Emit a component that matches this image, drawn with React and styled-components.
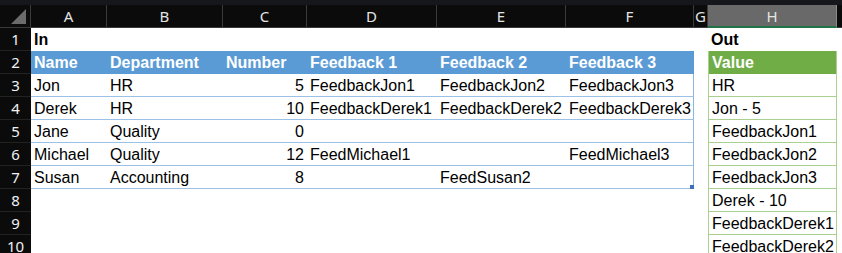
import React from 'react';
import styled, {createGlobalStyle} from 'styled-components';

const GlobalStyle = createGlobalStyle`
  html, body {
    margin: 0;
    padding: 0;
    background: #fff;
    overflow: hidden;
  }
`;

const COLS = [
  {key: 'A', w: 76},
  {key: 'B', w: 116},
  {key: 'C', w: 84},
  {key: 'D', w: 130},
  {key: 'E', w: 129},
  {key: 'F', w: 128},
  {key: 'G', w: 14},
  {key: 'H', w: 129},
];

const Sheet = styled.div`
  display: grid;
  grid-template-columns: 31px ${COLS.map(c => c.w + 'px').join(' ')} 1fr;
  grid-template-rows: 5px 23px;
  grid-auto-rows: 23px;
  width: 842px;
  height: 253px;
  overflow: hidden;
  font-family: "Liberation Sans", Arial, sans-serif;
  font-size: 16px;
  color: #000;
`;

const TopStrip = styled.div`
  grid-column: 1 / -1;
  background: #15171c;
`;

const Corner = styled.div`
  background: #0b0b0b;
  border-right: 1px solid #3a3a3a;
  border-bottom: 1px solid #3a3a3a;
  box-sizing: border-box;
  display: flex;
  align-items: flex-end;
  justify-content: flex-end;
  padding: 0 4px 3px 0;
`;

const ColHead = styled.div`
  box-sizing: border-box;
  background: ${p => (p.$active ? '#696969' : '#0b0b0b')};
  color: #e4e4e4;
  border-right: 1px solid ${p => (p.$active ? '#8a8a8a' : '#3a3a3a')};
  border-bottom: ${p => (p.$active ? '2px solid #217346' : '1px solid #3a3a3a')};
  font-family: "Noto Sans", "Open Sans", sans-serif;
  font-size: 15px;
  line-height: 23px;
  text-align: center;
`;

const RowHead = styled.div`
  box-sizing: border-box;
  background: #0b0b0b;
  color: #f2f2f2;
  border-bottom: 1px solid #222;
  font-family: "Noto Sans", "Open Sans", sans-serif;
  font-size: 15px;
  line-height: 23px;
  text-align: center;
`;

const tones = {
  blueHead: 'background:#5b9bd5;color:#fff;font-weight:bold;',
  greenHead: 'background:#70ad47;color:#fff;font-weight:bold;border-left:1px solid #a9d08e;border-right:1px solid #a9d08e;',
  blue: 'border-bottom:1px solid #9bc2e6;',
  green: 'border-bottom:1px solid #a9d08e;border-left:1px solid #a9d08e;border-right:1px solid #a9d08e;',
  title: 'font-weight:bold;',
  plain: '',
};

const Cell = styled.div`
  position: relative;
  box-sizing: border-box;
  padding: 1px 3px 0;
  line-height: 22px;
  white-space: nowrap;
  overflow: visible;
  text-align: ${p => (p.$num ? 'right' : 'left')};
  ${p => tones[p.$tone || 'plain']}
  ${p => (p.$edge ? 'border-right:1px solid #8db4e2;' : '')}
`;

const Handle = styled.span`
  position: absolute;
  right: -1px;
  bottom: -1px;
  width: 4px;
  height: 4px;
  background: #3e6fb8;
`;

const people = [
  ['Jon', 'HR', 5, 'FeedbackJon1', 'FeedbackJon2', 'FeedbackJon3'],
  ['Derek', 'HR', 10, 'FeedbackDerek1', 'FeedbackDerek2', 'FeedbackDerek3'],
  ['Jane', 'Quality', 0, '', '', ''],
  ['Michael', 'Quality', 12, 'FeedMichael1', '', 'FeedMichael3'],
  ['Susan', 'Accounting', 8, '', 'FeedSusan2', ''],
];

const output = ['HR', 'Jon - 5', 'FeedbackJon1', 'FeedbackJon2', 'FeedbackJon3', 'Derek - 10', 'FeedbackDerek1', 'FeedbackDerek2'];

const headers = ['Name', 'Department', 'Number', 'Feedback 1', 'Feedback 2', 'Feedback 3'];

const CornerMark = () => (
  <svg width="15" height="15" viewBox="0 0 15 15">
    <polygon points="15,0 15,15 0,15" fill="#6b6b6b" />
  </svg>
);

function renderRow(n) {
  const cells = [];
  if (n === 1) {
    cells.push(<Cell key="a" $tone="title">In</Cell>);
    for (let i = 1; i < 7; i++) cells.push(<Cell key={i} />);
    cells.push(<Cell key="h" $tone="title">Out</Cell>);
  } else if (n === 2) {
    headers.forEach((h, i) => cells.push(<Cell key={i} $tone="blueHead">{h}</Cell>));
    cells.push(<Cell key="g" />);
    cells.push(<Cell key="h" $tone="greenHead">Value</Cell>);
  } else {
    const person = people[n - 3];
    if (person) {
      person.forEach((v, i) => (
        cells.push(
          <Cell key={i} $tone="blue" $num={i === 2} $edge={i === 5}>
            {v}
            {n === 7 && i === 5 && <Handle />}
          </Cell>
        )
      ));
    } else {
      for (let i = 0; i < 6; i++) cells.push(<Cell key={i} />);
    }
    cells.push(<Cell key="g" />);
    cells.push(<Cell key="h" $tone="green">{output[n - 3]}</Cell>);
  }
  cells.push(<Cell key="rest" />);
  return cells;
}

export default function App() {
  const rows = [1, 2, 3, 4, 5, 6, 7, 8, 9, 10];
  return (
    <>
      <GlobalStyle />
      <Sheet>
        <TopStrip />
        <Corner><CornerMark /></Corner>
        {COLS.map(c => (
          <ColHead key={c.key} $active={c.key === 'H'}>{c.key}</ColHead>
        ))}
        <ColHead />
        {rows.map(n => (
          <React.Fragment key={n}>
            <RowHead>{n}</RowHead>
            {renderRow(n)}
          </React.Fragment>
        ))}
      </Sheet>
    </>
  );
}
